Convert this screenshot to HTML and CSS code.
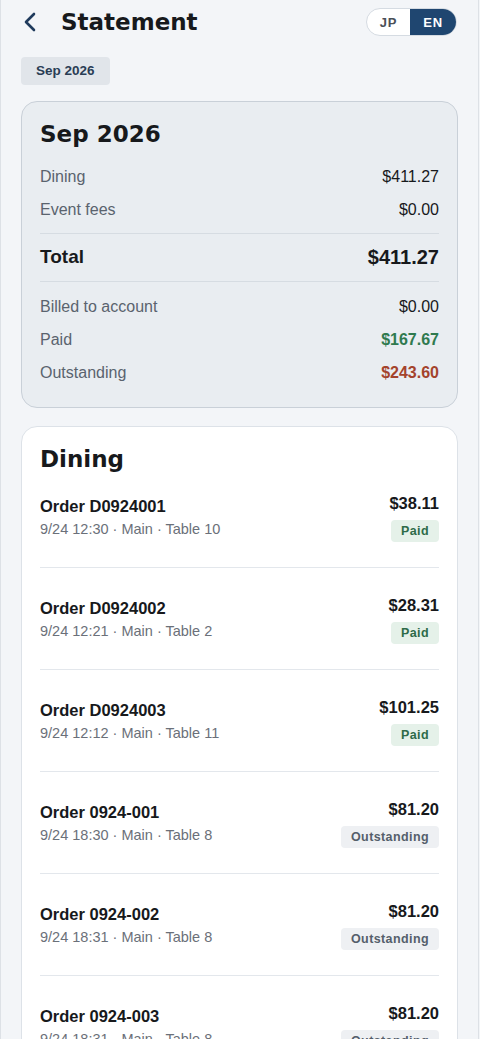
FILE: index.html
```html
<!DOCTYPE html>
<html lang="en">
<head>
    <meta charset="UTF-8">
    <meta name="viewport" content="width=device-width, initial-scale=1.0">
    <title>Statement</title>
    <link rel="stylesheet" href="styles.css">
</head>
<body>
    <div class="page">
        <!-- Header -->
        <header class="topbar">
            <button class="back" aria-label="Back">
                <svg width="18" height="22" viewBox="0 0 18 22"><polyline points="13,3 5,11 13,19" fill="none" stroke="#1f3a5c" stroke-width="2.6" stroke-linecap="round" stroke-linejoin="round"/></svg>
            </button>
            <h1 class="title">Statement</h1>
            <div class="lang-toggle">
                <span class="lang">JP</span>
                <span class="lang active">EN</span>
            </div>
        </header>

        <span class="month-chip">Sep 2026</span>

        <!-- Summary card -->
        <section class="summary">
            <h2>Sep 2026</h2>
            <div class="line"><span class="label">Dining</span><span>$411.27</span></div>
            <div class="line"><span class="label">Event fees</span><span>$0.00</span></div>
            <div class="line total"><span>Total</span><span class="total-value">$411.27</span></div>
            <div class="line"><span class="label">Billed to account</span><span>$0.00</span></div>
            <div class="line"><span class="label">Paid</span><span class="paid">$167.67</span></div>
            <div class="line"><span class="label">Outstanding</span><span class="due">$243.60</span></div>
        </section>

        <!-- Dining orders -->
        <section class="dining">
            <h2>Dining</h2>

            <div class="order">
                <div class="order-info">
                    <div class="order-name">Order D0924001</div>
                    <div class="order-meta">9/24 12:30 · Main · Table 10</div>
                </div>
                <div class="order-side">
                    <div class="order-price">$38.11</div>
                    <span class="badge badge-paid">Paid</span>
                </div>
            </div>

            <div class="order">
                <div class="order-info">
                    <div class="order-name">Order D0924002</div>
                    <div class="order-meta">9/24 12:21 · Main · Table 2</div>
                </div>
                <div class="order-side">
                    <div class="order-price">$28.31</div>
                    <span class="badge badge-paid">Paid</span>
                </div>
            </div>

            <div class="order">
                <div class="order-info">
                    <div class="order-name">Order D0924003</div>
                    <div class="order-meta">9/24 12:12 · Main · Table 11</div>
                </div>
                <div class="order-side">
                    <div class="order-price">$101.25</div>
                    <span class="badge badge-paid">Paid</span>
                </div>
            </div>

            <div class="order">
                <div class="order-info">
                    <div class="order-name">Order 0924-001</div>
                    <div class="order-meta">9/24 18:30 · Main · Table 8</div>
                </div>
                <div class="order-side">
                    <div class="order-price">$81.20</div>
                    <span class="badge badge-due">Outstanding</span>
                </div>
            </div>

            <div class="order">
                <div class="order-info">
                    <div class="order-name">Order 0924-002</div>
                    <div class="order-meta">9/24 18:31 · Main · Table 8</div>
                </div>
                <div class="order-side">
                    <div class="order-price">$81.20</div>
                    <span class="badge badge-due">Outstanding</span>
                </div>
            </div>

            <div class="order">
                <div class="order-info">
                    <div class="order-name">Order 0924-003</div>
                    <div class="order-meta">9/24 18:31 · Main · Table 8</div>
                </div>
                <div class="order-side">
                    <div class="order-price">$81.20</div>
                    <span class="badge badge-due">Outstanding</span>
                </div>
            </div>
        </section>
    </div>
</body>
</html>
```

FILE: styles.css
```css
/* Page */
body {
    margin: 0;
    background-color: #f3f5f8;
    font-family: "Liberation Sans", Arial, sans-serif;
    color: #17191c;
}

.page {
    box-sizing: border-box;
    width: 479px;
    min-height: 100vh;
    padding: 0 20px 24px;
    border-left: 1px solid #dde1e6;
    border-right: 1px solid #dde1e6;
}

/* Header */
.topbar {
    display: flex;
    align-items: center;
    height: 44px;
}

.back {
    width: 18px;
    height: 22px;
    padding: 0;
    border: none;
    background: none;
    display: flex;
    cursor: pointer;
}

.title {
    margin: 0 0 0 22px;
    font-family: "DejaVu Sans", sans-serif;
    font-size: 23px;
    font-weight: bold;
    line-height: 28px;
}

.lang-toggle {
    margin-left: auto;
    margin-right: 1px;
    display: flex;
    height: 26px;
    border: 1px solid #d5dbe2;
    border-radius: 14px;
    overflow: hidden;
    background: white;
}

.lang {
    display: flex;
    align-items: center;
    padding: 0 13px;
    font-size: 13px;
    font-weight: bold;
    letter-spacing: 0.8px;
    color: #4a4f57;
}

.lang.active {
    background-color: #1f4670;
    color: white;
}

/* Month chip */
.month-chip {
    display: inline-block;
    margin-top: 13px;
    height: 28px;
    line-height: 28px;
    padding: 0 15px;
    border-radius: 4px;
    background-color: #e1e5ea;
    color: #2a3d55;
    font-size: 13.5px;
    font-weight: bold;
}

/* Summary card */
.summary {
    margin-top: 16px;
    padding: 18px;
    background-color: #e9edf1;
    border: 1px solid #c9d0d8;
    border-radius: 16px;
}

.summary h2,
.dining h2 {
    margin: 0;
    font-family: "DejaVu Sans", sans-serif;
    font-size: 23px;
    font-weight: bold;
    line-height: 28px;
}

.summary h2 {
    margin-bottom: 12px;
}

.line {
    display: flex;
    justify-content: space-between;
    padding: 6px 0;
    font-size: 16px;
    line-height: 21px;
}

.line .label {
    color: #5a636e;
}

.line.total {
    margin: 7px 0 8px;
    padding: 11px 0 12px;
    border-top: 1px solid #d6dce2;
    border-bottom: 1px solid #d6dce2;
    font-size: 19px;
    font-weight: bold;
    line-height: 24px;
}

.total-value {
    font-size: 20px;
}

.paid {
    color: #2f7a4f;
    font-weight: bold;
}

.due {
    color: #a4432c;
    font-weight: bold;
}

/* Dining card */
.dining {
    margin-top: 18px;
    padding: 18px 18px 0;
    background-color: white;
    border: 1px solid #dde2e8;
    border-radius: 16px;
}

.order {
    display: flex;
    justify-content: space-between;
    align-items: flex-start;
    padding: 26px 0 25px;
    border-bottom: 1px solid #e3e7ec;
}

.dining h2 + .order {
    padding-top: 19px;
}

.order-info {
    padding-top: 3px;
}

.order-name {
    font-size: 16.5px;
    font-weight: bold;
    line-height: 22px;
}

.order-meta {
    margin-top: 1px;
    font-size: 14.5px;
    line-height: 22px;
    color: #6b7079;
}

.order-side {
    display: flex;
    flex-direction: column;
    align-items: flex-end;
}

.order-price {
    font-size: 16.5px;
    font-weight: bold;
    line-height: 22px;
}

.badge {
    margin-top: 6px;
    height: 22px;
    line-height: 22px;
    padding: 0 10px;
    border-radius: 4px;
    font-size: 12.5px;
    font-weight: bold;
    letter-spacing: 0.4px;
}

.badge-paid {
    background-color: #e5f1e9;
    color: #2e6b48;
}

.badge-due {
    background-color: #eef0f3;
    color: #555f6b;
}
```
